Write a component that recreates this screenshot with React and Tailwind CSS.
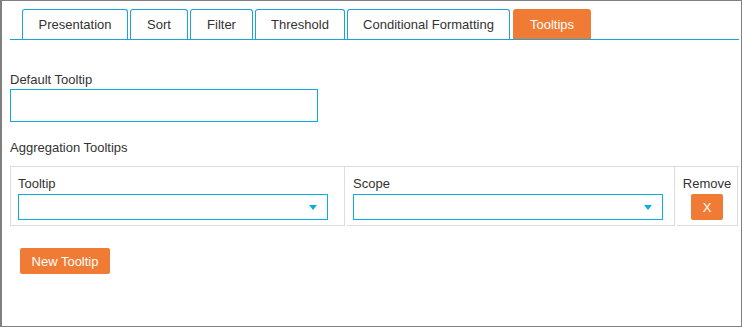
import React from "react";

const tabs = [
  { label: "Presentation", w: "w-[106px]" },
  { label: "Sort", w: "w-[58px]" },
  { label: "Filter", w: "w-[63px]" },
  { label: "Threshold", w: "w-[90px]" },
  { label: "Conditional Formatting", w: "w-[163px]" },
];

function Select() {
  return (
    <div className="relative h-[26px] w-[310px] border border-[#0badde] bg-white">
      <span className="absolute right-[10px] top-[10px] h-0 w-0 border-l-[4.5px] border-r-[4.5px] border-t-[5px] border-l-transparent border-r-transparent border-t-[#0badde]" />
    </div>
  );
}

export default function App() {
  return (
    <div
      className="box-border flex h-[327px] w-[742px] flex-col border border-l-2 border-[#808080] bg-white text-[13px] leading-[15px] text-[#333]"
      style={{ fontFamily: '"Liberation Sans", Arial, sans-serif' }}
    >
      {/* Tabs */}
      <div className="ml-[8px] mr-[2px] mt-[8px] flex gap-[2px] border-b border-[#17a6d6] pl-[12px]">
        {tabs.map((t) => (
          <div
            key={t.label}
            className={`${t.w} flex h-[30px] items-center justify-center rounded-t-[3px] border border-b-0 border-[#17a6d6] bg-white`}
          >
            {t.label}
          </div>
        ))}
        <div className="ml-[1px] flex h-[30px] w-[78px] items-center justify-center rounded-t-[3px] bg-[#f07b34] text-white">
          Tooltips
        </div>
      </div>

      {/* Content */}
      <div className="ml-[8px] mr-[2px] flex flex-col">
        <div className="mt-[32px]">Default Tooltip</div>
        <div className="mt-[2px] h-[33px] w-[308px] border border-[#0badde]" />
        <div className="mt-[18px]">Aggregation Tooltips</div>

        <div className="mt-[11px] flex gap-[2px] border-l border-t border-[#dcdcdc]">
          <div className="flex w-[334px] flex-col border-b border-r border-[#dcdcdc] px-[7px] pb-[5px] pt-[9px]">
            <div className="mb-[3px]">Tooltip</div>
            <Select />
          </div>
          <div className="flex w-[328px] flex-col border-b border-r border-[#dcdcdc] px-[6px] pb-[5px] pt-[9px]">
            <div className="mb-[3px]">Scope</div>
            <Select />
          </div>
          <div className="flex w-[61px] flex-col items-center border-b border-r border-[#dcdcdc] pb-[5px] pt-[9px]">
            <div className="mb-[3px]">Remove</div>
            <button className="flex h-[26px] w-[32px] items-center justify-center rounded-[2px] bg-[#f07b34] text-white">
              X
            </button>
          </div>
        </div>

        <div className="mt-[22px] pl-[10px]">
          <button className="flex h-[26px] w-[90px] items-center justify-center rounded-[2px] bg-[#f07b34] text-white">
            New Tooltip
          </button>
        </div>
      </div>
    </div>
  );
}
